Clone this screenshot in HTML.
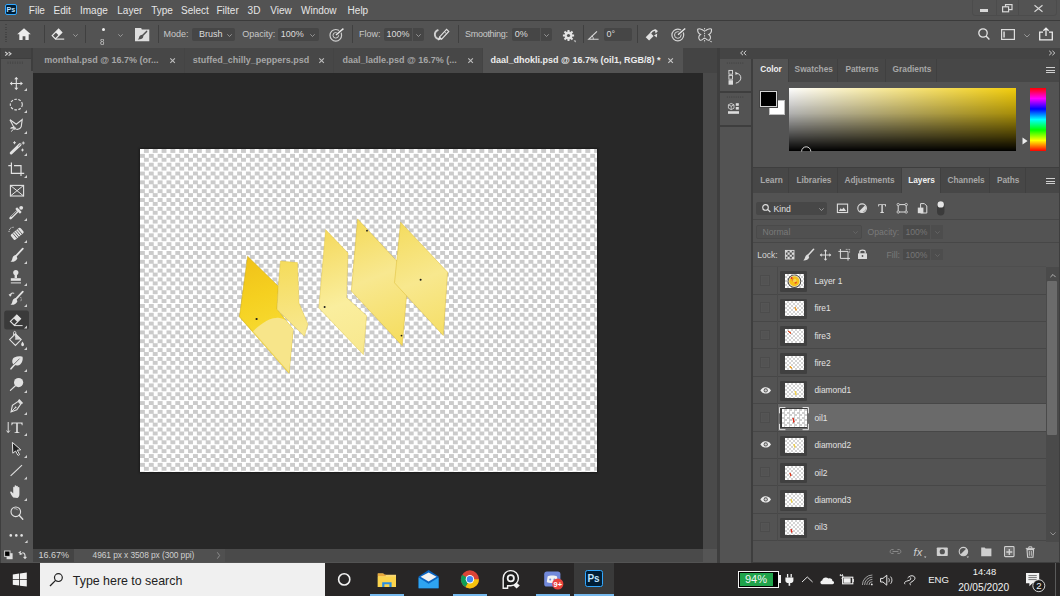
<!DOCTYPE html>
<html><head><meta charset="utf-8">
<style>
*{margin:0;padding:0;box-sizing:border-box}
html,body{width:1060px;height:596px;overflow:hidden;background:#535353;font-family:"Liberation Sans",sans-serif;color:#ddd}
.a{position:absolute}
.t{position:absolute;white-space:nowrap;line-height:1}
svg{position:absolute;overflow:visible}
</style></head><body>
<!-- MENU BAR -->
<div class="a" style="left:0;top:0;width:1060px;height:20px;background:#535353"></div>
<div class="a" style="left:0;top:19.5px;width:1060px;height:1px;background:#3b3b3b"></div>

<!-- menu content -->
<div class="a" style="left:5px;top:4.3px;width:12.2px;height:11px;border:1.2px solid #31a8ff;border-radius:2px;background:#001e36"></div>
<div class="t" style="left:6.5px;top:5.9px;font-size:7.2px;font-weight:700;color:#bfe3ff">Ps</div>
<div class="t" style="left:28.8px;top:5.7px;font-size:10px;color:#e6e6e6">File</div>
<div class="t" style="left:53.6px;top:5.7px;font-size:10px;color:#e6e6e6">Edit</div>
<div class="t" style="left:80px;top:5.7px;font-size:10px;color:#e6e6e6">Image</div>
<div class="t" style="left:117.3px;top:5.7px;font-size:10px;color:#e6e6e6">Layer</div>
<div class="t" style="left:151.2px;top:5.7px;font-size:10px;color:#e6e6e6">Type</div>
<div class="t" style="left:181px;top:5.7px;font-size:10px;color:#e6e6e6">Select</div>
<div class="t" style="left:216.5px;top:5.7px;font-size:10px;color:#e6e6e6">Filter</div>
<div class="t" style="left:247.6px;top:5.7px;font-size:10px;color:#e6e6e6">3D</div>
<div class="t" style="left:270.3px;top:5.7px;font-size:10px;color:#e6e6e6">View</div>
<div class="t" style="left:301px;top:5.7px;font-size:10px;color:#e6e6e6">Window</div>
<div class="t" style="left:347.6px;top:5.7px;font-size:10px;color:#e6e6e6">Help</div>
<!-- window controls -->
<div class="a" style="left:972.3px;top:-2px;width:85px;height:18px;border:1px solid #4c4c4c;border-radius:3px"></div>
<div class="a" style="left:995.5px;top:0;width:1px;height:15.5px;background:#4c4c4c"></div>
<div class="a" style="left:1018.2px;top:0;width:1px;height:15.5px;background:#4c4c4c"></div>
<div class="a" style="left:980px;top:8.6px;width:8px;height:3px;background:#d8d8d8"></div>
<svg style="left:1002px;top:4px" width="11" height="8" viewBox="0 0 11 8"><rect x="3.5" y="0.6" width="6.5" height="5" fill="none" stroke="#d8d8d8" stroke-width="1.2"/><rect x="0.6" y="2.8" width="6" height="5" fill="#535353" stroke="#d8d8d8" stroke-width="1.2"/></svg>
<svg style="left:1034px;top:4.5px" width="9" height="7" viewBox="0 0 9 7"><path d="M0.5 0.3L8.5 6.7M8.5 0.3L0.5 6.7" stroke="#d8d8d8" stroke-width="1.1"/></svg>
<!-- OPTIONS BAR -->
<div class="a" style="left:0;top:20.5px;width:1060px;height:27.3px;background:#535353"></div>
<div class="a" style="left:0;top:47.8px;width:1060px;height:0.6px;background:#3b3b3b"></div>

<!-- options content -->
<div class="a" style="left:5px;top:24px;width:1.5px;height:20px;background:repeating-linear-gradient(#444 0 1px,transparent 1px 2.5px)"></div>
<svg style="left:17px;top:28px" width="14" height="12" viewBox="0 0 14 12"><path d="M7 0.3L0.2 6.3H2.3V12H5.6V8.3H8.4V12H11.7V6.3H13.8Z" fill="#ececec"/></svg>
<div class="a" style="left:44.3px;top:24.8px;width:1px;height:18.7px;background:#404040"></div>
<svg style="left:51px;top:28px" width="14" height="12" viewBox="0 0 14 12"><path d="M1.2 7.6L7.6 1.2L10.8 4.4L4.4 10.8Z" fill="none" stroke="#ececec" stroke-width="1.2"/><path d="M4.6 4.2L7.6 1.2L10.8 4.4L7.8 7.4Z" fill="#ececec"/><path d="M4.4 11.1H13.2" stroke="#ececec" stroke-width="1.1"/></svg>
<svg style="left:73px;top:34px" width="5" height="3" viewBox="0 0 5 3"><path d="M0.3 0.3L2.5 2.5L4.7 0.3" fill="none" stroke="#aaa" stroke-width="0.8"/></svg>
<div class="a" style="left:84.6px;top:24.8px;width:1px;height:18.7px;background:#404040"></div>
<div class="a" style="left:101.5px;top:28px;width:3.2px;height:3.2px;border-radius:50%;background:#f0f0f0"></div>
<div class="t" style="left:100.2px;top:37px;font-size:9.8px;color:#c8c8c8;transform:scaleX(0.82);transform-origin:0 0">8</div>
<svg style="left:118px;top:34px" width="5" height="3" viewBox="0 0 5 3"><path d="M0.3 0.3L2.5 2.5L4.7 0.3" fill="none" stroke="#aaa" stroke-width="0.8"/></svg>
<svg style="left:134.6px;top:27.7px" width="14.3" height="13.3" viewBox="0 0 14.3 13.3"><path d="M0 0H6.2L6.8 1.6H14.3V13.3H0Z" fill="#dedede"/><path d="M11.6 3.4L7.6 7.6" stroke="#535353" stroke-width="1.5" stroke-linecap="round"/><path d="M7.4 6.8C5.6 6.8 4.4 8 4 9.4C3.7 10.4 3.4 10.9 2.8 11.4C5 11.6 7 11 7.9 9.8C8.5 9 8.6 7.6 7.4 6.8Z" fill="#535353"/></svg>
<div class="a" style="left:157.6px;top:24.8px;width:1px;height:18.7px;background:#404040"></div>
<div class="t" style="left:163.6px;top:30.2px;font-size:9px;color:#c8c8c8">Mode:</div>
<div class="a" style="left:192.2px;top:27.9px;width:42.6px;height:13.2px;background:#464646;border-radius:2px"></div>
<div class="t" style="left:199px;top:30.2px;font-size:9px;color:#dcdcdc">Brush</div>
<svg style="left:226.6px;top:34px" width="5" height="3" viewBox="0 0 5 3"><path d="M0.3 0.3L2.5 2.5L4.7 0.3" fill="none" stroke="#aaa" stroke-width="0.8"/></svg>
<div class="t" style="left:242.3px;top:30.2px;font-size:9px;color:#c8c8c8">Opacity:</div>
<div class="a" style="left:278.2px;top:27.9px;width:27.6px;height:13.2px;background:#464646;border-radius:2px 0 0 2px"></div>
<div class="a" style="left:306.4px;top:27.9px;width:12.2px;height:13.2px;background:#464646;border-radius:0 2px 2px 0"></div>
<div class="t" style="left:280.8px;top:30.2px;font-size:9px;color:#dcdcdc">100%</div>
<svg style="left:310px;top:34px" width="5" height="3" viewBox="0 0 5 3"><path d="M0.3 0.3L2.5 2.5L4.7 0.3" fill="none" stroke="#aaa" stroke-width="0.8"/></svg>
<svg style="left:328.6px;top:27.5px" width="15.2" height="13.6" viewBox="0 0 15.2 13.6"><circle cx="6.8" cy="7.3" r="5.8" fill="none" stroke="#cfcfcf" stroke-width="1.2"/><circle cx="6.8" cy="7.3" r="2.8" fill="none" stroke="#cfcfcf" stroke-width="1"/><path d="M6.8 7.3L14.4 0.6" stroke="#535353" stroke-width="3"/><path d="M7 7.1L14.4 0.6" stroke="#e8e8e8" stroke-width="1.4"/></svg>
<div class="a" style="left:352.3px;top:24.8px;width:1px;height:18.7px;background:#404040"></div>
<div class="t" style="left:359px;top:30.2px;font-size:9px;color:#c8c8c8">Flow:</div>
<div class="a" style="left:383.8px;top:27.9px;width:28.5px;height:13.2px;background:#464646;border-radius:2px 0 0 2px"></div>
<div class="a" style="left:412.9px;top:27.9px;width:11.4px;height:13.2px;background:#464646;border-radius:0 2px 2px 0"></div>
<div class="t" style="left:386.6px;top:30.2px;font-size:9px;color:#dcdcdc">100%</div>
<svg style="left:416px;top:34px" width="5" height="3" viewBox="0 0 5 3"><path d="M0.3 0.3L2.5 2.5L4.7 0.3" fill="none" stroke="#aaa" stroke-width="0.8"/></svg>
<svg style="left:433.8px;top:28px" width="15.5" height="13" viewBox="0 0 15.5 13"><path d="M4.4 1.8C1.8 2.8 0.6 5 0.9 7.2C1.2 9.4 3 10.9 5.2 11.2" fill="none" stroke="#cfcfcf" stroke-width="1.9"/><path d="M5.4 9.2L12.6 1.4L14.8 3.5L7.6 11.2Z" fill="none" stroke="#e0e0e0" stroke-width="1.1"/><path d="M3.8 12.6L5.4 8.6L8 11.1Z" fill="#e0e0e0"/><path d="M10.4 3.8L12.6 5.8" stroke="#e0e0e0" stroke-width="0.9"/></svg>
<div class="a" style="left:457.7px;top:24.8px;width:1px;height:18.7px;background:#404040"></div>
<div class="t" style="left:465px;top:30.2px;font-size:9px;letter-spacing:-0.28px;color:#c8c8c8">Smoothing:</div>
<div class="a" style="left:512px;top:27.9px;width:28px;height:13.2px;background:#464646;border-radius:2px 0 0 2px"></div>
<div class="a" style="left:540.6px;top:27.9px;width:11.4px;height:13.2px;background:#464646;border-radius:0 2px 2px 0"></div>
<div class="t" style="left:514.8px;top:30.2px;font-size:9px;color:#dcdcdc">0%</div>
<svg style="left:543.8px;top:34px" width="5" height="3" viewBox="0 0 5 3"><path d="M0.3 0.3L2.5 2.5L4.7 0.3" fill="none" stroke="#aaa" stroke-width="0.8"/></svg>
<svg style="left:563px;top:29.6px" width="13" height="12" viewBox="0 0 13 12"><g transform="translate(5.5 5.5)"><circle r="3.9" fill="#e4e4e4"/><g stroke="#e4e4e4" stroke-width="2"><path d="M0 -5.6V5.6M-5.6 0H5.6M-4 -4L4 4M4 -4L-4 4"/></g><circle r="1.6" fill="#535353"/></g><path d="M10.6 10.6H12.6V12.6Z" fill="#e4e4e4"/></svg>
<div class="a" style="left:582.7px;top:24.8px;width:1px;height:18.7px;background:#404040"></div>
<svg style="left:588px;top:30px" width="11" height="10" viewBox="0 0 11 10"><path d="M10.6 9.3H0.7L9 1.3" fill="none" stroke="#d8d8d8" stroke-width="1.1"/><path d="M5.4 9.3A5 5 0 0 0 4 5.7" fill="none" stroke="#d8d8d8" stroke-width="0.9"/></svg>
<div class="a" style="left:603.7px;top:27.9px;width:28.6px;height:13.2px;background:#464646;border-radius:2px"></div>
<div class="t" style="left:606.4px;top:30.2px;font-size:9px;color:#dcdcdc">0°</div>
<div class="a" style="left:636.7px;top:24.8px;width:1px;height:18.7px;background:#404040"></div>
<svg style="left:645px;top:28.5px" width="13.5" height="12.5" viewBox="0 0 13.5 12.5"><path d="M0.7 8.2L5.2 3.7L8.6 7.1L4.1 11.6Z" fill="#e2e2e2"/><path d="M5.5 4.5C6.5 2.2 9 0.8 11.3 1.6" fill="none" stroke="#e2e2e2" stroke-width="1.6"/><path d="M9.6 0L13 1.9L10.6 4.6Z" fill="#e2e2e2"/><path d="M9 6.6L12.2 4.5L11.8 8.5Z" fill="#e2e2e2"/></svg>
<svg style="left:671px;top:28px" width="15" height="13.5" viewBox="0 0 15 13.5"><circle cx="6.8" cy="7" r="5.9" fill="none" stroke="#d4d4d4" stroke-width="1.2"/><circle cx="6.8" cy="7" r="3.3" fill="none" stroke="#d4d4d4" stroke-width="1"/><path d="M6.8 7L14.2 0.5" stroke="#535353" stroke-width="3"/><path d="M7 6.8L14.2 0.5" stroke="#e8e8e8" stroke-width="1.4"/></svg>
<svg style="left:697px;top:27.8px" width="15" height="14.5" viewBox="0 0 15 14.5"><path d="M7 3C5 0.5 1.5 0.6 0.7 1.2C0.5 3.6 2 5.8 3.5 6.5C1.4 7.6 1.2 10.6 2.8 12C4.5 12.6 6.4 11 7 10" fill="none" stroke="#d8d8d8" stroke-width="1.1"/><path d="M8.3 3C10.3 0.5 13.8 0.6 14.5 1.2C14.7 3.6 13.2 5.8 11.8 6.5C13.8 7.6 14 10.6 12.5 12C10.8 12.6 8.9 11 8.3 10" fill="none" stroke="#d8d8d8" stroke-width="1.1"/><path d="M7.6 0V14.5" stroke="#d8d8d8" stroke-width="1" stroke-dasharray="1.4 1"/><path d="M12.6 13H14.6V14.5Z" fill="#d8d8d8"/></svg>
<svg style="left:977.6px;top:28.3px" width="12" height="12" viewBox="0 0 12 12"><circle cx="5" cy="5" r="4.2" fill="none" stroke="#e4e4e4" stroke-width="1.3"/><path d="M8 8L11.4 11.4" stroke="#e4e4e4" stroke-width="1.4"/></svg>
<svg style="left:1001px;top:29.2px" width="14" height="11" viewBox="0 0 14 11"><rect x="0.6" y="0.6" width="12.8" height="9.8" fill="none" stroke="#dcdcdc" stroke-width="1.2"/><rect x="2.3" y="2.5" width="1.5" height="6" fill="#dcdcdc"/></svg>
<svg style="left:1023.5px;top:33.5px" width="6" height="4" viewBox="0 0 6 4"><path d="M0.3 0.3L3 3L5.7 0.3" fill="none" stroke="#aaa" stroke-width="0.8"/></svg>
<svg style="left:1038.8px;top:27px" width="14" height="13.5" viewBox="0 0 14 13.5"><path d="M4 5.2H0.7V12.8H13.3V5.2H10" fill="none" stroke="#ececec" stroke-width="1.3"/><path d="M7 9V1.2M4.4 3.8L7 1.2L9.6 3.8" fill="none" stroke="#ececec" stroke-width="1.3"/></svg>
<!-- TOOLBAR -->
<div class="a" style="left:0;top:48px;width:33px;height:514.5px;background:#3e3e3e"></div>
<div class="a" style="left:1px;top:48.2px;width:30px;height:10px;background:#444"></div>
<div class="a" style="left:1px;top:58.5px;width:30px;height:504px;background:#535353"></div>
<div class="a" style="left:1px;top:70.6px;width:31.8px;height:492px;background:#535353"></div>
<!-- toolbar icons -->
<svg style="left:0;top:0" width="33" height="562"><path d="M5.2 52L7.6 53.8L5.2 55.6M8.6 52L11 53.8L8.6 55.6" fill="none" stroke="#cfcfcf" stroke-width="1.1"/><path d="M8 61.5V64M10.4 61.5V64M12.8 61.5V64M15.2 61.5V64M17.6 61.5V64M20 61.5V64M22.4 61.5V64" stroke="#474747" stroke-width="1"/><g fill="none" stroke="#e2e2e2" stroke-width="1.1"><path d="M16.3 77.6V89.4M10.4 83.5H22.2"/></g><g fill="#e2e2e2"><path d="M16.3 77L14.2 79.3H18.4Z"/><path d="M16.3 90L14.2 87.7H18.4Z"/><path d="M9.8 83.5L12.1 81.4V85.6Z"/><path d="M22.8 83.5L20.5 81.4V85.6Z"/></g><path d="M27 88V91H24Z" fill="#d0d0d0"/><ellipse cx="16.3" cy="104.6" rx="6" ry="5.3" fill="none" stroke="#e2e2e2" stroke-width="1.1" stroke-dasharray="2.6 1.4"/><path d="M27 110V113H24Z" fill="#d0d0d0"/><path d="M10 119.8L16.3 124.3L22.2 119.5L21.2 126.8C19.6 129.8 16.6 130 14.6 128.4C13.4 127.6 12 126.6 10.6 128.6" fill="none" stroke="#e2e2e2" stroke-width="1.1"/><path d="M10 119.8L14.2 128" fill="none" stroke="#e2e2e2" stroke-width="1.1"/><circle cx="14.2" cy="128.2" r="1.2" fill="none" stroke="#e2e2e2" stroke-width="0.9"/><path d="M13 129.4L11.4 131.6" stroke="#e2e2e2" stroke-width="1"/><path d="M27 131V134H24Z" fill="#d0d0d0"/><path d="M11.2 153L20 144.6" stroke="#e2e2e2" stroke-width="3" stroke-linecap="round"/><path d="M18.2 146.4L20.8 143.8" stroke="#535353" stroke-width="0.8"/><path d="M14.5 141.2V144.2M13 142.7H16M23.3 141.5V144.5M21.8 143H24.8M22.5 148.6V151.4M21.1 150H23.9" stroke="#e2e2e2" stroke-width="0.9"/><path d="M27 153V156H24Z" fill="#d0d0d0"/><path d="M8.3 165.6H11.4V173.3H21M11.4 162.5V165.6M14 165.6H21V176M21 173.3H24.2" fill="none" stroke="#e2e2e2" stroke-width="1.2"/><path d="M27 175V178H24Z" fill="#d0d0d0"/><rect x="10.4" y="185.4" width="13.2" height="10.6" fill="none" stroke="#e2e2e2" stroke-width="1.1"/><path d="M10.4 185.4L23.6 196M23.6 185.4L10.4 196" stroke="#e2e2e2" stroke-width="1"/><path d="M10.6 218.2L18.4 210.4" stroke="#e2e2e2" stroke-width="2.6" stroke-linecap="round"/><path d="M11.4 216.8L17 211.2" stroke="#535353" stroke-width="1"/><path d="M16.2 208.2L20.8 212.8" stroke="#e2e2e2" stroke-width="2.4"/><circle cx="21.2" cy="207.8" r="1.9" fill="#e2e2e2"/><path d="M27 218V221H24Z" fill="#d0d0d0"/><g transform="rotate(-40 17 234)"><rect x="11" y="230.6" width="12.6" height="6.8" rx="1.4" fill="#e2e2e2"/><path d="M14.2 230.6V237.4M16.4 230.6V237.4M18.6 230.6V237.4M20.8 230.6V237.4" stroke="#535353" stroke-width="0.8"/></g><path d="M9 232C9 229 11 227 14 227.3" fill="none" stroke="#e2e2e2" stroke-width="0.9" stroke-dasharray="1 0.8"/><path d="M27 240V243H24Z" fill="#d0d0d0"/><path d="M22.8 248.6L15.6 256.4" stroke="#e2e2e2" stroke-width="1.8" stroke-linecap="round"/><path d="M15.8 255C13.6 255.4 12.6 257 12.3 258.8C12 260.2 11.4 261 10.4 261.8C13.4 262.2 16.6 261 17.4 258.2Z" fill="#e2e2e2"/><path d="M27 261V264H24Z" fill="#d0d0d0"/><circle cx="15.8" cy="272.6" r="2.6" fill="#e2e2e2"/><rect x="14.6" y="274" width="2.4" height="4" fill="#e2e2e2"/><path d="M10.8 278.2H20.8V280.8H10.8Z" fill="#e2e2e2"/><path d="M10.8 282.4H21V283.4H10.8Z" fill="#e2e2e2"/><path d="M27 283V286H24Z" fill="#d0d0d0"/><path d="M22.8 291.6L15.6 299.4" stroke="#e2e2e2" stroke-width="1.8" stroke-linecap="round"/><path d="M15.8 298C13.6 298.4 12.6 300 12.3 301.8C12 303.2 11.4 304 10.4 304.8C13.4 305.2 16.6 304 17.4 301.2Z" fill="#e2e2e2"/><path d="M9.8 295.2C10.6 293.2 12.8 292.4 14.2 293.4" fill="none" stroke="#e2e2e2" stroke-width="1.1"/><path d="M8.6 294.2L10.2 296.8L12 294.6Z" fill="#e2e2e2"/><path d="M20.6 297.2C21.6 298.6 21.6 300.6 20.2 301.6" fill="none" stroke="#e2e2e2" stroke-width="0.8" stroke-dasharray="0.9 0.7"/><path d="M27 304V307H24Z" fill="#d0d0d0"/><rect x="4.2" y="310.4" width="24.8" height="19.2" rx="2.5" fill="#3a3a3a"/><path d="M10.4 321.4L16.8 315L20.6 318.8L14.2 325.2Z" fill="none" stroke="#e2e2e2" stroke-width="1.1"/><path d="M13.6 318.2L16.8 315L20.6 318.8L17.4 322Z" fill="#e2e2e2"/><path d="M14 325.6H22.6" stroke="#e2e2e2" stroke-width="1"/><path d="M27 325.5V328.5H24Z" fill="#d0d0d0"/><path d="M9.6 339.6L15.4 333.8L21.2 339.6L15.4 345.4Z" fill="none" stroke="#e2e2e2" stroke-width="1.1"/><path d="M15.4 333.8L21.2 339.6L15.2 339.8Z" fill="#e2e2e2" opacity="0.9"/><path d="M13.6 335.4V332.4C13.6 331 15.8 331 15.8 332.6V337" fill="none" stroke="#e2e2e2" stroke-width="0.9"/><path d="M22.4 341.6C21.6 343 21.2 343.8 21.2 344.6C21.2 345.6 22 346.2 22.6 346.2C23.4 346.2 24 345.6 24 344.6C24 343.8 23.4 343 22.4 341.6Z" fill="#e2e2e2"/><path d="M27 347V350H24Z" fill="#d0d0d0"/><path d="M11 368.8L15.6 363.4" stroke="#e2e2e2" stroke-width="1.6" stroke-linecap="round"/><path d="M14.2 357.4C17.2 356.2 21.2 356 22.6 357C23.2 360.6 21.6 364 18.8 365.2C16.6 366 14.4 365.2 13 363.8C11.8 362.2 12 358.6 14.2 357.4Z" fill="#e2e2e2"/><path d="M13.6 364.6L19.6 358.6" stroke="#535353" stroke-width="0.8"/><path d="M27 369V372H24Z" fill="#d0d0d0"/><circle cx="18.6" cy="382.6" r="4.6" fill="#e2e2e2"/><path d="M15.4 385.8L10.4 390.4" stroke="#e2e2e2" stroke-width="1.2" stroke-linecap="round"/><path d="M27 390V393H24Z" fill="#d0d0d0"/><path d="M11 412L12.4 405.4L18.2 401.4L20.8 404L16.8 409.8Z" fill="none" stroke="#e2e2e2" stroke-width="1.1"/><path d="M18.6 399.8L22.4 403.6" stroke="#e2e2e2" stroke-width="2"/><path d="M11 412L15 408" stroke="#e2e2e2" stroke-width="0.9"/><circle cx="15.6" cy="407.4" r="0.9" fill="#e2e2e2"/><path d="M27 412V415H24Z" fill="#d0d0d0"/><path d="M8.2 422V432.4M6.6 430.6L8.2 432.6L9.8 430.6" fill="none" stroke="#e2e2e2" stroke-width="1"/><path d="M11.4 422.4H22.6V425.2H21.8C21.6 423.8 21.2 423.6 20 423.6H17.8V431.4C17.8 432 18.2 432.2 19.4 432.2V432.9H14.6V432.2C15.8 432.2 16.2 432 16.2 431.4V423.6H14C12.8 423.6 12.4 423.8 12.2 425.2H11.4Z" fill="#e2e2e2"/><path d="M27 433V436H24Z" fill="#d0d0d0"/><path d="M12.4 442.4L20.8 449.8L17.2 450.2L19.6 454.6L18 455.4L15.6 451L12.8 453.2Z" fill="#202020" stroke="#e2e2e2" stroke-width="1"/><path d="M27 455V458H24Z" fill="#d0d0d0"/><path d="M10.6 475.8L22 465.2" stroke="#e2e2e2" stroke-width="1.1"/><path d="M27 476.5V479.5H24Z" fill="#d0d0d0"/><path d="M13.2 497.6C11.8 496 10.8 494 10.2 492.6C10 491.8 10.8 491.2 11.6 491.8L13.2 493.4V487.4C13.2 486.4 14.6 486.4 14.6 487.4V491.2V486C14.6 485 16.2 485 16.2 486V491V486.4C16.2 485.6 17.8 485.6 17.8 486.4V491.2V487.6C17.8 486.8 19.4 486.8 19.4 487.6V494.2C19.4 496.4 18.4 497.6 17.4 497.9Z" fill="#e2e2e2"/><path d="M27 498V501H24Z" fill="#d0d0d0"/><circle cx="15.8" cy="511.8" r="4.8" fill="none" stroke="#e2e2e2" stroke-width="1.1"/><path d="M19.2 515.2L22.8 519.2" stroke="#e2e2e2" stroke-width="1.3" stroke-linecap="round"/><path d="M14.2 508.8C15.6 508.4 17.2 509 17.8 510.2" fill="none" stroke="#e2e2e2" stroke-width="0.7"/><circle cx="10.8" cy="535.4" r="1.3" fill="#e2e2e2"/><circle cx="16.3" cy="535.4" r="1.3" fill="#e2e2e2"/><circle cx="21.6" cy="535.4" r="1.3" fill="#e2e2e2"/><path d="M27.6 540V543H24.6Z" fill="#d0d0d0"/><rect x="6.6" y="553.2" width="6" height="6" fill="#dedede"/><rect x="4.6" y="551" width="5.4" height="5.4" fill="#000" stroke="#cfcfcf" stroke-width="1"/><path d="M20 552.8L22.2 554.4M20.2 552.4V555M21 551.4L19.2 552.6L21 553.8M22.2 552.8C24 552.8 25 553.6 25 555.6V558M23.6 556.8L25 558.4L26.4 556.8" fill="none" stroke="#dedede" stroke-width="1.1"/></svg>
<!-- DOC TAB BAR -->
<div class="a" style="left:33.3px;top:48.2px;width:684px;height:24.4px;background:#444"></div>

<div class="a" style="left:33.3px;top:48.3px;width:151px;height:24.3px;background:#474747"></div>
<div class="a" style="left:185.3px;top:48.3px;width:148px;height:24.3px;background:#474747"></div>
<div class="a" style="left:334.2px;top:48.3px;width:148px;height:24.3px;background:#474747"></div>
<div class="a" style="left:482.8px;top:48.3px;width:200.4px;height:24.3px;background:#535353"></div>
<div class="t" style="left:44.2px;top:56.2px;font-size:9px;font-weight:700;color:#a6a6a6">monthal.psd @ 16.7% (or...</div>
<div class="t" style="left:192.7px;top:56.2px;font-size:9px;font-weight:700;color:#a6a6a6">stuffed_chilly_peppers.psd</div>
<div class="t" style="left:342.5px;top:56.2px;font-size:9px;font-weight:700;color:#a6a6a6">daal_ladle.psd @ 16.7% (...</div>
<div class="t" style="left:490.6px;top:56.2px;font-size:9px;font-weight:700;color:#ececec">daal_dhokli.psd @ 16.7% (oil1, RGB/8) *</div>
<svg style="left:169.70000000000002px;top:57.6px" width="5.2" height="5.2" viewBox="0 0 5.2 5.2"><path d="M0.3 0.3L4.9 4.9M4.9 0.3L0.3 4.9" stroke="#bdbdbd" stroke-width="1.1"/></svg><svg style="left:318.9px;top:57.6px" width="5.2" height="5.2" viewBox="0 0 5.2 5.2"><path d="M0.3 0.3L4.9 4.9M4.9 0.3L0.3 4.9" stroke="#bdbdbd" stroke-width="1.1"/></svg><svg style="left:467.79999999999995px;top:57.6px" width="5.2" height="5.2" viewBox="0 0 5.2 5.2"><path d="M0.3 0.3L4.9 4.9M4.9 0.3L0.3 4.9" stroke="#bdbdbd" stroke-width="1.1"/></svg><svg style="left:668.0px;top:57.6px" width="5.2" height="5.2" viewBox="0 0 5.2 5.2"><path d="M0.3 0.3L4.9 4.9M4.9 0.3L0.3 4.9" stroke="#c8c8c8" stroke-width="1.1"/></svg>
<!-- CANVAS AREA -->
<div class="a" style="left:33.3px;top:72.6px;width:670px;height:476.3px;background:#282828"></div>
<div class="a" style="left:703px;top:72.6px;width:14.3px;height:476.3px;background:#4a4a4a"></div>

<div class="a" style="left:140px;top:149.4px;width:457px;height:323px;box-shadow:0 0 2px 1px rgba(0,0,0,0.35);background-color:#fff;background-image:conic-gradient(#cbcbcb 25%,#fff 0 50%,#cbcbcb 0 75%,#fff 0);background-size:8.832px 8.832px;background-position:0 0"></div>

<svg style="left:0;top:0" width="1060" height="596">
<defs>
<linearGradient id="gA" x1="250" y1="258" x2="275" y2="330" gradientUnits="userSpaceOnUse"><stop offset="0" stop-color="#f0c21a"/><stop offset="0.5" stop-color="#f5d020"/><stop offset="1" stop-color="#f7da30"/></linearGradient><filter id="soft" x="-10%" y="-10%" width="120%" height="120%"><feGaussianBlur stdDeviation="0.7"/></filter>
<linearGradient id="gB" x1="285" y1="262" x2="300" y2="335" gradientUnits="userSpaceOnUse"><stop offset="0" stop-color="#f5dc5c"/><stop offset="1" stop-color="#f8e890"/></linearGradient>
<linearGradient id="gC" x1="320" y1="230" x2="365" y2="350" gradientUnits="userSpaceOnUse"><stop offset="0" stop-color="#f4d85a"/><stop offset="0.6" stop-color="#faee9e"/><stop offset="1" stop-color="#f8e88e"/></linearGradient>
<linearGradient id="gD" x1="355" y1="220" x2="405" y2="345" gradientUnits="userSpaceOnUse"><stop offset="0" stop-color="#f4da5a"/><stop offset="0.45" stop-color="#f8e890"/><stop offset="1" stop-color="#f5dc5c"/></linearGradient>
<linearGradient id="gE" x1="398" y1="225" x2="445" y2="335" gradientUnits="userSpaceOnUse"><stop offset="0" stop-color="#f4dc60"/><stop offset="0.5" stop-color="#f8e88e"/><stop offset="1" stop-color="#f5de66"/></linearGradient>
</defs>
<path d="M247.6 256.2L278.3 286.3L277 309L293.1 329.5L289 373.2L239.4 316.8Z" fill="url(#gA)" stroke="#c9a814" stroke-width="0.5"/>
<clipPath id="clipA"><path d="M247.6 256.2L278.3 286.3L277 309L293.1 329.5L289 373.2L239.4 316.8Z"/></clipPath>
<g clip-path="url(#clipA)"><path d="M250 334C258 326 268 318 276 318C282 317 288 321 294 326L300 380L250 380Z" fill="#f7e58a" filter="url(#soft)"/><path d="M239.4 316.8L289 373.2" stroke="#e8c830" stroke-width="1.4" opacity="0.6"/></g>
<path d="M280.4 261.1L297.5 262.6L299 303L307.9 324.2L304.5 336.3L277 309.4L278.3 286.3Z" fill="url(#gB)" stroke="#dcc040" stroke-width="0.4"/>
<path d="M325.6 229.6L348 253L346.5 297.5L366.6 315.7L363.4 354.7L318.8 308Z" fill="url(#gC)" stroke="#dcc040" stroke-width="0.4"/>
<path d="M357.6 218.9L408.5 273.6L402.2 345.7L351.3 291Z" fill="url(#gD)" stroke="#d8b830" stroke-width="0.45"/>
<path d="M400.6 222.2L447.6 272.2L443.3 335.6L394.5 282.8Z" fill="url(#gE)" stroke="#d8b830" stroke-width="0.45"/>
<circle cx="256.6" cy="319" r="1.1" fill="#1a1a1a"/>
<circle cx="324.6" cy="306.9" r="1" fill="#1a1a1a"/>
<circle cx="367" cy="230.7" r="0.9" fill="#1a1a1a"/>
<circle cx="401.5" cy="335.6" r="0.9" fill="#1a1a1a"/>
<circle cx="420.6" cy="279.8" r="1" fill="#1a1a1a"/>
</svg>
<!-- STATUS BAR -->
<div class="a" style="left:33.3px;top:548.9px;width:684px;height:13.6px;background:#4a4a4a"></div>

<div class="a" style="left:703px;top:548.9px;width:14.3px;height:13.6px;background:#555"></div>
<div class="a" style="left:33.3px;top:548.9px;width:40.5px;height:13.6px;background:#444"></div>
<div class="a" style="left:73.8px;top:548.9px;width:151.2px;height:13.6px;background:#505050"></div>
<div class="t" style="left:38.4px;top:551.2px;font-size:9px;letter-spacing:0px;color:#d2d2d2">16.67%</div>
<div class="t" style="left:92.6px;top:551.4px;font-size:8.4px;letter-spacing:-0.08px;color:#cfcfcf">4961 px x 3508 px (300 ppi)</div>
<svg style="left:217.4px;top:552px" width="3" height="7" viewBox="0 0 3 7"><path d="M0.3 0.3L2.6 3.5L0.3 6.7" fill="none" stroke="#999" stroke-width="0.8"/></svg>
<!-- RIGHT SEPARATOR -->
<div class="a" style="left:717.3px;top:48px;width:342.7px;height:514.5px;background:#3e3e3e"></div>
<!-- collapsed column -->
<div class="a" style="left:720px;top:48.3px;width:340px;height:10.3px;background:#444"></div>
<div class="a" style="left:720px;top:58.7px;width:30.6px;height:32.8px;background:#535353"></div>
<div class="a" style="left:720px;top:92.7px;width:30.6px;height:32.8px;background:#535353"></div>
<div class="a" style="left:720px;top:126.7px;width:30.6px;height:436px;background:#535353"></div>
<!-- COLOR PANEL -->
<div class="a" style="left:752.6px;top:58.6px;width:306px;height:23px;background:#474747"></div>
<div class="a" style="left:752.6px;top:81.6px;width:306px;height:85.8px;background:#535353"></div>

<!-- right column content -->
<svg style="left:0;top:0" width="1060" height="596">
<path d="M743 50.8L740.6 53L743 55.2M746.2 50.8L743.8 53L746.2 55.2" fill="none" stroke="#cfcfcf" stroke-width="1"/>
<path d="M1049.2 50.8L1051.6 53L1049.2 55.2M1052.4 50.8L1054.8 53L1052.4 55.2" fill="none" stroke="#cfcfcf" stroke-width="1"/>
<path d="M727.4 62.2V64M729.6 62.2V64M731.8 62.2V64M734 62.2V64M736.2 62.2V64M738.4 62.2V64M740.6 62.2V64M742.8 62.2V64" stroke="#474747" stroke-width="0.9"/>
<path d="M727.4 96.2V98M729.6 96.2V98M731.8 96.2V98M734 96.2V98M736.2 96.2V98M738.4 96.2V98M740.6 96.2V98M742.8 96.2V98" stroke="#474747" stroke-width="0.9"/>
<rect x="728.9" y="70.4" width="3.6" height="3.8" fill="none" stroke="#dcdcdc" stroke-width="0.9"/>
<rect x="728.9" y="75.4" width="3.6" height="3.8" fill="none" stroke="#dcdcdc" stroke-width="0.9"/>
<rect x="728.5" y="80.2" width="4.5" height="4.5" fill="#dcdcdc"/>
<path d="M735.2 71.8L735.6 75L738 73.2Z" fill="#dcdcdc"/>
<path d="M736.4 73.6C739.2 73.2 741 75.6 740.8 78.2C740.6 80.6 738.6 82.6 735.8 83.2" fill="none" stroke="#dcdcdc" stroke-width="1"/>
<path d="M728.4 104.8L731.2 103.4L734 104.8V108.2L731.2 109.6L728.4 108.2Z M728.4 104.8L731.2 106.2L734 104.8M731.2 106.2V109.6" fill="none" stroke="#dcdcdc" stroke-width="0.8"/>
<rect x="735.8" y="103.2" width="3" height="2.6" fill="#dcdcdc"/>
<rect x="735.8" y="107" width="3" height="2.6" fill="#dcdcdc"/>
<rect x="728" y="111.2" width="11" height="2.6" fill="#dcdcdc"/>
</svg>
<!-- color panel -->
<div class="a" style="left:752.6px;top:58.6px;width:35.1px;height:23px;background:#535353"></div>
<div class="a" style="left:787.7px;top:58.6px;width:1px;height:23px;background:#404040"></div>
<div class="a" style="left:836.8px;top:58.6px;width:1px;height:23px;background:#404040"></div>
<div class="a" style="left:884.6px;top:58.6px;width:1px;height:23px;background:#404040"></div>
<div class="a" style="left:936px;top:58.6px;width:1px;height:23px;background:#404040"></div>
<div class="t" style="left:760.2px;top:65px;font-size:8.3px;font-weight:700;color:#f0f0f0">Color</div>
<div class="t" style="left:794.6px;top:65px;font-size:8.3px;font-weight:700;color:#a8a8a8">Swatches</div>
<div class="t" style="left:845.4px;top:65px;font-size:8.3px;font-weight:700;color:#a8a8a8">Patterns</div>
<div class="t" style="left:892.6px;top:65px;font-size:8.3px;font-weight:700;color:#a8a8a8">Gradients</div>
<div class="a" style="left:1046px;top:67px;width:9px;height:6.5px;background:repeating-linear-gradient(#cfcfcf 0 1.2px,transparent 1.2px 2.6px)"></div>
<div class="a" style="left:768.8px;top:99.6px;width:16px;height:15.8px;background:#fff;border:1px solid #bdbdbd"></div>
<div class="a" style="left:760.2px;top:90.8px;width:16.8px;height:16.4px;background:#000;border:1.6px solid #d6d6d6;box-shadow:0 0 0 1px #444"></div>
<div class="a" style="left:789.2px;top:87.6px;width:226.8px;height:63.6px;background:linear-gradient(to bottom,rgba(0,0,0,0) 0%,rgba(0,0,0,0.3) 40%,rgba(0,0,0,0.7) 75%,#000 100%),linear-gradient(to right,#fff,#f2cd0c)"></div>
<svg style="left:800px;top:143px" width="14" height="9" viewBox="0 0 14 9"><path d="M1.6 8.4A4.6 4.6 0 0 1 10.8 8.4" fill="none" stroke="#e8e8e8" stroke-width="0.9"/></svg>
<div class="a" style="left:1029.5px;top:87.6px;width:16.3px;height:63.6px;background:linear-gradient(to bottom,#ff0000 0%,#ff00ff 16.6%,#0000ff 33.3%,#00ffff 50%,#00ff00 66.6%,#ffff00 83.3%,#ff0000 100%)"></div>
<svg style="left:1021.6px;top:137.4px" width="6" height="8" viewBox="0 0 6 8"><path d="M0.5 0.6L5.6 4L0.5 7.4Z" fill="#ececec"/></svg>
<!-- LAYERS PANEL -->
<div class="a" style="left:752.6px;top:168.3px;width:306px;height:24.6px;background:#474747"></div>
<div class="a" style="left:752.6px;top:193.2px;width:306px;height:369px;background:#535353"></div>

<!-- layers header -->
<div class="a" style="left:901px;top:168.3px;width:39px;height:24.6px;background:#535353"></div>
<div class="a" style="left:788.3px;top:168.3px;width:1px;height:24.6px;background:#404040"></div><div class="a" style="left:836.6px;top:168.3px;width:1px;height:24.6px;background:#404040"></div><div class="a" style="left:900.5px;top:168.3px;width:1px;height:24.6px;background:#404040"></div><div class="a" style="left:939.9px;top:168.3px;width:1px;height:24.6px;background:#404040"></div><div class="a" style="left:989px;top:168.3px;width:1px;height:24.6px;background:#404040"></div><div class="a" style="left:1025.3px;top:168.3px;width:1px;height:24.6px;background:#404040"></div>
<div class="t" style="left:760.2px;top:176.2px;font-size:8.3px;font-weight:700;color:#a8a8a8">Learn</div>
<div class="t" style="left:796.4px;top:176.2px;font-size:8.3px;font-weight:700;color:#a8a8a8">Libraries</div>
<div class="t" style="left:844.4px;top:176.2px;font-size:8.3px;font-weight:700;color:#a8a8a8">Adjustments</div>
<div class="t" style="left:908.2px;top:176.2px;font-size:8.3px;font-weight:700;color:#f0f0f0">Layers</div>
<div class="t" style="left:947.4px;top:176.2px;font-size:8.3px;font-weight:700;color:#a8a8a8">Channels</div>
<div class="t" style="left:996.9px;top:176.2px;font-size:8.3px;font-weight:700;color:#a8a8a8">Paths</div>
<div class="a" style="left:1046px;top:178.4px;width:9px;height:6.5px;background:repeating-linear-gradient(#cfcfcf 0 1.2px,transparent 1.2px 2.6px)"></div>
<!-- filter row -->
<div class="a" style="left:756px;top:202px;width:71px;height:13.2px;background:#474747;border-radius:2px"></div>
<svg style="left:762.3px;top:204.4px" width="9" height="8.4" viewBox="0 0 9 8.4"><circle cx="3.5" cy="3.4" r="2.8" fill="none" stroke="#e0e0e0" stroke-width="1.1"/><path d="M5.5 5.4L8.4 8.1" stroke="#e0e0e0" stroke-width="1.3"/></svg>
<div class="t" style="left:773.6px;top:205px;font-size:8.6px;color:#e0e0e0">Kind</div>
<svg style="left:818.9px;top:208px" width="5" height="3" viewBox="0 0 5 3"><path d="M0.3 0.3L2.5 2.5L4.7 0.3" fill="none" stroke="#aaa" stroke-width="0.8"/></svg>
<svg style="left:0;top:0" width="1060" height="596">
<rect x="837.4" y="204.1" width="10.2" height="8.4" fill="none" stroke="#dcdcdc" stroke-width="1.1"/><path d="M838.8 211L840.6 208.2L842 209.6L843.6 207.6L846.2 211Z" fill="#dcdcdc"/>
<circle cx="862.1" cy="208.2" r="4.3" fill="none" stroke="#dcdcdc" stroke-width="1.1"/><path d="M865.1 205.2A4.3 4.3 0 0 1 859.1 211.2Z" fill="#dcdcdc"/>
<path d="M878.2 204.2H886V206.4H885.3C885.1 205.4 884.8 205.1 884 205.1H882.8V211.5C882.8 212 883.1 212.2 884 212.2V212.9H880.2V212.2C881.1 212.2 881.4 212 881.4 211.5V205.1H880.2C879.4 205.1 879.1 205.4 878.9 206.4H878.2Z" fill="#dcdcdc"/>
<rect x="898.2" y="204.6" width="8" height="7.4" fill="none" stroke="#dcdcdc" stroke-width="1"/><circle cx="898.2" cy="204.6" r="1.2" fill="#535353" stroke="#dcdcdc" stroke-width="0.8"/><circle cx="906.2" cy="204.6" r="1.2" fill="#535353" stroke="#dcdcdc" stroke-width="0.8"/><circle cx="898.2" cy="212" r="1.2" fill="#535353" stroke="#dcdcdc" stroke-width="0.8"/><circle cx="906.2" cy="212" r="1.2" fill="#535353" stroke="#dcdcdc" stroke-width="0.8"/>
<path d="M920.6 203.6H924.4L926.8 206V213H920.6Z" fill="none" stroke="#dcdcdc" stroke-width="1"/><rect x="917.8" y="207.6" width="5.6" height="5.6" fill="#dcdcdc"/>
<rect x="937" y="201" width="7.4" height="14.4" rx="3.7" fill="#3b3b3b"/><circle cx="940.7" cy="204.4" r="3.2" fill="#e6e6e6"/>
</svg>
<div class="a" style="left:752.6px;top:219px;width:306px;height:1px;background:#474747"></div>
<!-- blend row -->
<div class="a" style="left:756px;top:224.8px;width:105.7px;height:14.2px;background:#505050;border:1px solid #4a4a4a;border-radius:2px"></div>
<div class="t" style="left:762.6px;top:228.2px;font-size:8.6px;color:#7a7a7a">Normal</div>
<svg style="left:853px;top:231px" width="5" height="3" viewBox="0 0 5 3"><path d="M0.3 0.3L2.5 2.5L4.7 0.3" fill="none" stroke="#6a6a6a" stroke-width="0.8"/></svg>
<div class="t" style="left:867.6px;top:228.2px;font-size:8.6px;color:#7a7a7a">Opacity:</div>
<div class="a" style="left:902.5px;top:225px;width:27.7px;height:13.6px;background:#4a4a4a"></div>
<div class="a" style="left:931.2px;top:225px;width:11.6px;height:13.6px;background:#4d4d4d"></div>
<div class="t" style="left:905.4px;top:228.2px;font-size:8.6px;color:#767676">100%</div>
<svg style="left:934.6px;top:231px" width="5" height="3" viewBox="0 0 5 3"><path d="M0.3 0.3L2.5 2.5L4.7 0.3" fill="none" stroke="#6a6a6a" stroke-width="0.8"/></svg>
<div class="a" style="left:752.6px;top:242px;width:306px;height:1px;background:#474747"></div>
<!-- lock row -->
<div class="t" style="left:757.2px;top:250.6px;font-size:8.6px;color:#d4d4d4">Lock:</div>
<svg style="left:0;top:0" width="1060" height="596">
<rect x="785.4" y="250.4" width="8.6" height="8.6" fill="none" stroke="#dcdcdc" stroke-width="0.9"/><path d="M785.4 250.4h2.15v2.15h-2.15zM789.7 250.4h2.15v2.15h-2.15zM787.55 252.55h2.15v2.15h-2.15zM791.85 252.55h2.15v2.15h-2.15zM785.4 254.7h2.15v2.15h-2.15zM789.7 254.7h2.15v2.15h-2.15zM787.55 256.85h2.15v2.15h-2.15zM791.85 256.85h2.15v2.15h-2.15z" fill="#dcdcdc"/>
<path d="M813.6 249.2L807.8 255.4" stroke="#dcdcdc" stroke-width="1.5" stroke-linecap="round"/><path d="M807.8 254.4C806 254.8 805.3 256.2 805 257.6C804.8 258.8 804.2 259.6 803.3 260.4C805.8 260.6 808.4 259.6 809.2 257.2Z" fill="#dcdcdc"/>
<path d="M825.5 250V260M820.5 255H830.5" stroke="#dcdcdc" stroke-width="1"/><path d="M825.5 249.2L823.7 251.2H827.3ZM825.5 260.8L823.7 258.8H827.3ZM819.7 255L821.7 253.2V256.8ZM831.3 255L829.3 253.2V256.8Z" fill="#dcdcdc"/>
<path d="M840.4 249V258.4H850M838.4 251.4H848V260.6" fill="none" stroke="#dcdcdc" stroke-width="1"/><path d="M845.8 249.4L849.6 249.4L849.6 253" fill="none" stroke="#dcdcdc" stroke-width="0.8" stroke-dasharray="1 0.7"/>
<path d="M859.8 253.4V251.6C859.8 249.6 865.2 249.6 865.2 251.6V253.4" fill="none" stroke="#dcdcdc" stroke-width="1.2"/><rect x="858" y="253.2" width="9" height="5.8" rx="0.6" fill="#dcdcdc"/><circle cx="862.5" cy="256" r="0.9" fill="#535353"/>
</svg>
<div class="t" style="left:886.6px;top:250.6px;font-size:8.6px;color:#7a7a7a">Fill:</div>
<div class="a" style="left:902.5px;top:248.6px;width:27.7px;height:11.8px;background:#4a4a4a"></div>
<div class="a" style="left:931.2px;top:248.6px;width:11.6px;height:11.8px;background:#4d4d4d"></div>
<div class="t" style="left:905.4px;top:250.8px;font-size:8.6px;color:#767676">100%</div>
<svg style="left:934.6px;top:253.6px" width="5" height="3" viewBox="0 0 5 3"><path d="M0.3 0.3L2.5 2.5L4.7 0.3" fill="none" stroke="#6a6a6a" stroke-width="0.8"/></svg>
<!-- layers list -->
<div class="a" style="left:753px;top:266px;width:293px;height:0.8px;background:#4e4e4e"></div>
<div class="a" style="left:753px;top:293.60px;width:293px;height:1px;background:#474747"></div>
<div class="a" style="left:777px;top:266.86px;width:0.6px;height:27.54px;background:#4a4a4a"></div>
<div class="a" style="left:759.8px;top:275.06px;width:10.4px;height:10.6px;border:1px solid #4c4c4c;box-shadow:inset 0 0 0 0.5px #585858"></div>
<div class="a" style="left:780.4px;top:271.26px;width:26.6px;height:20.4px;background:#404040;border-radius:1px"></div>
<div class="a" style="left:784.7px;top:273.86px;width:19.5px;height:14.4px;background-color:#fff;background-image:conic-gradient(#d4d4d4 25%,#fff 0 50%,#d4d4d4 0 75%,#fff 0);background-size:4px 4px"></div>
<svg style="left:784.7px;top:273.86px" width="19.5" height="14.4" viewBox="0 0 19.5 14.4"><circle cx="9.4" cy="7.2" r="6.8" fill="#444"/><circle cx="9.4" cy="7.2" r="5.9" fill="#e8e0c0"/><circle cx="9.4" cy="7.2" r="5" fill="#f6c21a"/><circle cx="8" cy="6" r="1.4" fill="#f08020"/><circle cx="10.6" cy="8.6" r="1.2" fill="#e85020"/><circle cx="6.6" cy="4" r="0.9" fill="#e02020"/><circle cx="9.6" cy="6.6" r="1.8" fill="#f8e060" opacity="0.8"/></svg>
<div class="t" style="left:814.4px;top:276.86px;font-size:8.4px;color:#e2e2e2">Layer 1</div>
<div class="a" style="left:753px;top:321.00px;width:293px;height:1px;background:#474747"></div>
<div class="a" style="left:777px;top:294.26px;width:0.6px;height:27.54px;background:#4a4a4a"></div>
<div class="a" style="left:759.8px;top:302.46px;width:10.4px;height:10.6px;border:1px solid #4c4c4c;box-shadow:inset 0 0 0 0.5px #585858"></div>
<div class="a" style="left:780.4px;top:298.66px;width:26.6px;height:20.4px;background:#404040;border-radius:1px"></div>
<div class="a" style="left:784.7px;top:301.26px;width:19.5px;height:14.4px;background-color:#fff;background-image:conic-gradient(#d4d4d4 25%,#fff 0 50%,#d4d4d4 0 75%,#fff 0);background-size:4px 4px"></div>
<svg style="left:0;top:27.66px" width="1060" height="300"><path d="M795 279l1.5 3l-0.6 0.4Z" fill="#f0a030" stroke="#f0a030" stroke-width="1"/></svg>
<div class="t" style="left:814.4px;top:304.26px;font-size:8.4px;color:#e2e2e2">fire1</div>
<div class="a" style="left:753px;top:348.40px;width:293px;height:1px;background:#474747"></div>
<div class="a" style="left:777px;top:321.66px;width:0.6px;height:27.54px;background:#4a4a4a"></div>
<div class="a" style="left:759.8px;top:329.86px;width:10.4px;height:10.6px;border:1px solid #4c4c4c;box-shadow:inset 0 0 0 0.5px #585858"></div>
<div class="a" style="left:780.4px;top:326.06px;width:26.6px;height:20.4px;background:#404040;border-radius:1px"></div>
<div class="a" style="left:784.7px;top:328.66px;width:19.5px;height:14.4px;background-color:#fff;background-image:conic-gradient(#d4d4d4 25%,#fff 0 50%,#d4d4d4 0 75%,#fff 0);background-size:4px 4px"></div>
<svg style="left:0;top:55.06px" width="1060" height="300"><path d="M788 276l3 2l-0.6 0.4Z" fill="#e04a20" stroke="#e04a20" stroke-width="1"/></svg>
<div class="t" style="left:814.4px;top:331.66px;font-size:8.4px;color:#e2e2e2">fire3</div>
<div class="a" style="left:753px;top:375.80px;width:293px;height:1px;background:#474747"></div>
<div class="a" style="left:777px;top:349.06px;width:0.6px;height:27.54px;background:#4a4a4a"></div>
<div class="a" style="left:759.8px;top:357.26px;width:10.4px;height:10.6px;border:1px solid #4c4c4c;box-shadow:inset 0 0 0 0.5px #585858"></div>
<div class="a" style="left:780.4px;top:353.46px;width:26.6px;height:20.4px;background:#404040;border-radius:1px"></div>
<div class="a" style="left:784.7px;top:356.06px;width:19.5px;height:14.4px;background-color:#fff;background-image:conic-gradient(#d4d4d4 25%,#fff 0 50%,#d4d4d4 0 75%,#fff 0);background-size:4px 4px"></div>
<svg style="left:0;top:82.46px" width="1060" height="300"><path d="M790 284l1.8 2l-0.6 0.4Z" fill="#f0a020" stroke="#f0a020" stroke-width="1"/></svg>
<div class="t" style="left:814.4px;top:359.06px;font-size:8.4px;color:#e2e2e2">fire2</div>
<div class="a" style="left:753px;top:403.20px;width:293px;height:1px;background:#474747"></div>
<div class="a" style="left:777px;top:376.46px;width:0.6px;height:27.54px;background:#4a4a4a"></div>
<svg style="left:759.6px;top:386.66px" width="11.4" height="6.8" viewBox="0 0 11.4 6.8"><path d="M0.4 3.4C2 1 3.8 0.3 5.7 0.3C7.6 0.3 9.4 1 11 3.4C9.4 5.8 7.6 6.5 5.7 6.5C3.8 6.5 2 5.8 0.4 3.4Z" fill="#ececec"/><circle cx="5.7" cy="3.4" r="2.1" fill="#535353"/><circle cx="5.7" cy="3.4" r="1.2" fill="#cfcfcf"/></svg>
<div class="a" style="left:780.4px;top:380.86px;width:26.6px;height:20.4px;background:#404040;border-radius:1px"></div>
<div class="a" style="left:784.7px;top:383.46px;width:19.5px;height:14.4px;background-color:#fff;background-image:conic-gradient(#d4d4d4 25%,#fff 0 50%,#d4d4d4 0 75%,#fff 0);background-size:4px 4px"></div>
<svg style="left:0;top:109.86px" width="1060" height="300"><path d="M795 281l1.4 3.5l-0.6 0.4Z" fill="#f2d24a" stroke="#f2d24a" stroke-width="1"/></svg>
<div class="t" style="left:814.4px;top:386.46px;font-size:8.4px;color:#e2e2e2">diamond1</div>
<div class="a" style="left:777.3px;top:404.40px;width:268.5px;height:26.94px;background:#6a6a6a"></div>
<div class="a" style="left:753px;top:430.60px;width:293px;height:1px;background:#474747"></div>
<div class="a" style="left:777px;top:403.86px;width:0.6px;height:27.54px;background:#4a4a4a"></div>
<div class="a" style="left:759.8px;top:412.06px;width:10.4px;height:10.6px;border:1px solid #4c4c4c;box-shadow:inset 0 0 0 0.5px #585858"></div>
<div class="a" style="left:780.3px;top:407.66px;width:27px;height:20.8px;background:#3a3a3a"></div>
<div class="a" style="left:782px;top:409.36px;width:24.5px;height:17.6px;background-color:#fff;background-image:conic-gradient(#cfcfcf 25%,#fff 0 50%,#cfcfcf 0 75%,#fff 0);background-size:5px 5px"></div>
<svg style="left:779.1px;top:406.56px" width="30" height="23.2" viewBox="0 0 28 22" preserveAspectRatio="none"><path d="M0.5 6V0.5H6M22 0.5H27.5V6M27.5 16V21.5H22M6 21.5H0.5V16" fill="none" stroke="#e8e8e8" stroke-width="0.9"/></svg>
<svg style="left:0;top:137.26px" width="1060" height="300"><path d="M793 281l1.2 4l-0.6 0.4Z" fill="#e02a1a" stroke="#e02a1a" stroke-width="1"/></svg>
<div class="t" style="left:814.4px;top:413.86px;font-size:8.4px;color:#e2e2e2">oil1</div>
<div class="a" style="left:753px;top:458.00px;width:293px;height:1px;background:#474747"></div>
<div class="a" style="left:777px;top:431.26px;width:0.6px;height:27.54px;background:#4a4a4a"></div>
<svg style="left:759.6px;top:441.46px" width="11.4" height="6.8" viewBox="0 0 11.4 6.8"><path d="M0.4 3.4C2 1 3.8 0.3 5.7 0.3C7.6 0.3 9.4 1 11 3.4C9.4 5.8 7.6 6.5 5.7 6.5C3.8 6.5 2 5.8 0.4 3.4Z" fill="#ececec"/><circle cx="5.7" cy="3.4" r="2.1" fill="#535353"/><circle cx="5.7" cy="3.4" r="1.2" fill="#cfcfcf"/></svg>
<div class="a" style="left:780.4px;top:435.66px;width:26.6px;height:20.4px;background:#404040;border-radius:1px"></div>
<div class="a" style="left:784.7px;top:438.26px;width:19.5px;height:14.4px;background-color:#fff;background-image:conic-gradient(#d4d4d4 25%,#fff 0 50%,#d4d4d4 0 75%,#fff 0);background-size:4px 4px"></div>
<svg style="left:0;top:164.66px" width="1060" height="300"><path d="M794 279l1.2 3l-0.6 0.4Z" fill="#f2d24a" stroke="#f2d24a" stroke-width="1"/></svg>
<div class="t" style="left:814.4px;top:441.26px;font-size:8.4px;color:#e2e2e2">diamond2</div>
<div class="a" style="left:753px;top:485.40px;width:293px;height:1px;background:#474747"></div>
<div class="a" style="left:777px;top:458.66px;width:0.6px;height:27.54px;background:#4a4a4a"></div>
<div class="a" style="left:759.8px;top:466.86px;width:10.4px;height:10.6px;border:1px solid #4c4c4c;box-shadow:inset 0 0 0 0.5px #585858"></div>
<div class="a" style="left:780.4px;top:463.06px;width:26.6px;height:20.4px;background:#404040;border-radius:1px"></div>
<div class="a" style="left:784.7px;top:465.66px;width:19.5px;height:14.4px;background-color:#fff;background-image:conic-gradient(#d4d4d4 25%,#fff 0 50%,#d4d4d4 0 75%,#fff 0);background-size:4px 4px"></div>
<svg style="left:0;top:192.06px" width="1060" height="300"><path d="M790 281l1.2 2.5l-0.6 0.4Z" fill="#e03a20" stroke="#e03a20" stroke-width="1"/></svg>
<div class="t" style="left:814.4px;top:468.66px;font-size:8.4px;color:#e2e2e2">oil2</div>
<div class="a" style="left:753px;top:512.80px;width:293px;height:1px;background:#474747"></div>
<div class="a" style="left:777px;top:486.06px;width:0.6px;height:27.54px;background:#4a4a4a"></div>
<svg style="left:759.6px;top:496.26px" width="11.4" height="6.8" viewBox="0 0 11.4 6.8"><path d="M0.4 3.4C2 1 3.8 0.3 5.7 0.3C7.6 0.3 9.4 1 11 3.4C9.4 5.8 7.6 6.5 5.7 6.5C3.8 6.5 2 5.8 0.4 3.4Z" fill="#ececec"/><circle cx="5.7" cy="3.4" r="2.1" fill="#535353"/><circle cx="5.7" cy="3.4" r="1.2" fill="#cfcfcf"/></svg>
<div class="a" style="left:780.4px;top:490.46px;width:26.6px;height:20.4px;background:#404040;border-radius:1px"></div>
<div class="a" style="left:784.7px;top:493.06px;width:19.5px;height:14.4px;background-color:#fff;background-image:conic-gradient(#d4d4d4 25%,#fff 0 50%,#d4d4d4 0 75%,#fff 0);background-size:4px 4px"></div>
<svg style="left:0;top:219.46px" width="1060" height="300"><path d="M791 280l1.2 3l-0.6 0.4Z" fill="#f2d24a" stroke="#f2d24a" stroke-width="1"/></svg>
<div class="t" style="left:814.4px;top:496.06px;font-size:8.4px;color:#e2e2e2">diamond3</div>
<div class="a" style="left:753px;top:540.20px;width:293px;height:1px;background:#474747"></div>
<div class="a" style="left:777px;top:513.46px;width:0.6px;height:27.54px;background:#4a4a4a"></div>
<div class="a" style="left:759.8px;top:521.66px;width:10.4px;height:10.6px;border:1px solid #4c4c4c;box-shadow:inset 0 0 0 0.5px #585858"></div>
<div class="a" style="left:780.4px;top:517.86px;width:26.6px;height:20.4px;background:#404040;border-radius:1px"></div>
<div class="a" style="left:784.7px;top:520.46px;width:19.5px;height:14.4px;background-color:#fff;background-image:conic-gradient(#d4d4d4 25%,#fff 0 50%,#d4d4d4 0 75%,#fff 0);background-size:4px 4px"></div>
<svg style="left:0;top:246.86px" width="1060" height="300"><path d="M791 282l1.2 3l-0.6 0.4Z" fill="#e03020" stroke="#e03020" stroke-width="1"/></svg>
<div class="t" style="left:814.4px;top:523.46px;font-size:8.4px;color:#e2e2e2">oil3</div>
<div class="a" style="left:1046.3px;top:266.6px;width:12.7px;height:275px;background:#4a4a4a"></div>
<div class="a" style="left:1047px;top:281.4px;width:10px;height:153.8px;background:#6b6b6b;border-radius:1px"></div>
<svg style="left:1049.6px;top:274px" width="6" height="3.5" viewBox="0 0 6 3.5"><path d="M0.4 3.1L3 0.5L5.6 3.1" fill="none" stroke="#bdbdbd" stroke-width="0.9"/></svg>
<svg style="left:1049.6px;top:532px" width="6" height="3.5" viewBox="0 0 6 3.5"><path d="M0.4 0.4L3 3L5.6 0.4" fill="none" stroke="#9a9a9a" stroke-width="0.9"/></svg>
<div class="a" style="left:1058.6px;top:169px;width:1.4px;height:393.5px;background:#3e3e3e"></div>
<svg style="left:0;top:0" width="1060" height="596">
<path d="M893.6 549.6H891.6C889.8 549.6 889.6 553.4 891.6 553.4H893.6M897.4 549.6H899.4C901.2 549.6 901.4 553.4 899.4 553.4H897.4M892.6 551.5H898.4" fill="none" stroke="#8a8a8a" stroke-width="1"/>
<text x="913.6" y="556" font-family="Liberation Sans" font-style="italic" font-size="11" fill="#cfcfcf">fx</text><path d="M924 556.6H926.4L925.2 558Z" fill="#cfcfcf"/>
<rect x="936.8" y="547.4" width="11" height="8.6" rx="0.8" fill="#cfcfcf"/><circle cx="942.3" cy="551.7" r="2.6" fill="#535353"/>
<circle cx="963.4" cy="551.6" r="4.2" fill="none" stroke="#cfcfcf" stroke-width="1.1"/><path d="M966.4 548.6A4.2 4.2 0 0 1 960.4 554.6Z" fill="#cfcfcf"/><path d="M966.6 556.6H969L967.8 558Z" fill="#cfcfcf"/>
<path d="M981.2 547.4H984.6L985.6 548.6H991.4V556.2H981.2Z" fill="#cfcfcf"/>
<rect x="1004.6" y="546.6" width="9.4" height="10" rx="0.8" fill="none" stroke="#cfcfcf" stroke-width="1.2"/><rect x="1005.8" y="547.8" width="7" height="7.6" fill="#cfcfcf" opacity="0.25"/><path d="M1009.3 549V555M1006.3 552H1012.3" stroke="#cfcfcf" stroke-width="1.3"/>
<path d="M1025.8 548.4H1034.8M1028.8 548.4V546.8H1031.8V548.4" fill="none" stroke="#cfcfcf" stroke-width="1"/><path d="M1027 549.6H1033.6L1033 557.2H1027.6Z" fill="none" stroke="#cfcfcf" stroke-width="1.1"/><path d="M1029.3 551V555.8M1031.3 551V555.8" stroke="#cfcfcf" stroke-width="0.9"/>
</svg>
<!-- TASKBAR -->
<div class="a" style="left:0;top:562.5px;width:1060px;height:34px;background:#282626"></div>
<div class="a" style="left:39.5px;top:562.8px;width:285.3px;height:33.2px;background:#f0f0f0"></div>

<svg style="left:0;top:0" width="1060" height="596">
<path d="M12.8 574.4L19.2 573.5V579.2H12.8ZM20 573.4L26.8 572.4V579.2H20ZM12.8 580H19.2V585.6L12.8 584.8ZM20 580H26.8V586.6L20 585.7Z" fill="#f2f2f2"/>
<circle cx="58.4" cy="577.6" r="3.9" fill="none" stroke="#222" stroke-width="1.2"/><path d="M55.6 580.4L50 586" stroke="#222" stroke-width="1.3"/>
<circle cx="344.2" cy="579.4" r="5.6" fill="none" stroke="#f2f2f2" stroke-width="1.6"/>
<path d="M377.8 573.4H383.2L384.6 574.8H396V587H377.8Z" fill="#f8d775"/><path d="M377.8 573.4H383.2L384.6 574.8H385.8V576.2H377.8Z" fill="#e7a83c"/><rect x="377.8" y="576.6" width="18.2" height="10.4" fill="#fbd44c"/><path d="M382.2 587V582.2H391.6V587H389.4V584.2H384.4V587Z" fill="#2b8ee0"/>
<path d="M418.6 576.6L428.6 570L438.6 576.6V588.2H418.6Z" fill="#0a64c0"/><path d="M418.6 577.6L428.6 583.8L438.6 577.6V588.2H418.6Z" fill="#2ea4f2"/><path d="M420.6 576.8L428.6 572.4L436.6 576.8L428.6 581.6Z" fill="#f2f2f2"/>
<circle cx="469.9" cy="579.3" r="9" fill="#db4437"/><path d="M469.9 579.3L478.9 579.3A9 9 0 0 1 465.4 587.1Z" fill="#f4c20d"/><path d="M469.9 579.3L465.4 587.1A9 9 0 0 1 462.1 574.8Z" fill="#0f9d58"/><circle cx="469.9" cy="579.3" r="4.2" fill="#fff"/><circle cx="469.9" cy="579.3" r="3.2" fill="#4285f4"/>
<path d="M503.2 588.2V578.2A7.6 7.6 0 1 1 510.8 585.8H507.6V588.2Z" fill="#1c1c1c" stroke="#f2f2f2" stroke-width="1.4"/><circle cx="510.8" cy="578.2" r="3.1" fill="none" stroke="#f2f2f2" stroke-width="1.8"/><path d="M516.4 582.6L519.8 585.6L516.6 588.6L513.4 585.6Z" fill="#f2f2f2"/>
<rect x="544.2" y="571.6" width="16.2" height="15" rx="2.6" fill="#7289da"/><path d="M547.6 576.6C549.4 575.2 555.2 575.2 557 576.6L557.8 582C556.4 583.4 548.2 583.4 546.8 582Z" fill="#f2f2f2"/><circle cx="550.2" cy="579.6" r="1" fill="#7289da"/><circle cx="554.4" cy="579.6" r="1" fill="#7289da"/>
<circle cx="557.8" cy="584" r="5.6" fill="#e8423c"/>
<text x="557.8" y="586.8" text-anchor="middle" font-family="Liberation Sans" font-weight="700" font-size="7.4" fill="#fff">9+</text>
</svg>
<div class="a" style="left:574px;top:562.5px;width:40.4px;height:33.5px;background:#3a3a3a"></div>
<div class="a" style="left:585px;top:570.4px;width:17.8px;height:16.6px;border:1.6px solid #31a8ff;border-radius:2.4px;background:#001e36"></div>
<div class="t" style="left:587.4px;top:573.6px;font-size:10px;font-weight:700;color:#bfe3ff">Ps</div>
<div class="a" style="left:370.2px;top:594.4px;width:34px;height:1.6px;background:#76b9ed"></div>
<div class="a" style="left:453.4px;top:594.4px;width:33.6px;height:1.6px;background:#76b9ed"></div>
<div class="a" style="left:535.8px;top:594.4px;width:33.9px;height:1.6px;background:#76b9ed"></div>
<div class="a" style="left:574px;top:594.4px;width:40.4px;height:1.6px;background:#76b9ed"></div>
<div class="t" style="left:72.8px;top:574.6px;font-size:12.4px;color:#222">Type here to search</div>
<!-- tray -->
<div class="a" style="left:738px;top:570.9px;width:41px;height:16.7px;border:1.6px solid #f2f2f2;background:#000"></div>
<div class="a" style="left:739.6px;top:572.5px;width:33.9px;height:13.5px;background:#1fa34a"></div>
<div class="a" style="left:779px;top:575.4px;width:2.4px;height:7.8px;background:#f2f2f2"></div>
<div class="t" style="left:745px;top:573.8px;font-size:11px;color:#f4f4f4">94%</div>
<svg style="left:0;top:0" width="1060" height="596">
<path d="M787.6 574V577.4M791.2 574V577.4" stroke="#f2f2f2" stroke-width="1.3"/><path d="M785.4 577.4H793.4V580.4C793.4 582.2 791.8 583 790.2 583V585.8H788.6V583C787 583 785.4 582.2 785.4 580.4Z" fill="#f2f2f2"/>
<path d="M802 582L807.3 577L812.6 582" fill="none" stroke="#e8e8e8" stroke-width="1"/>
<path d="M822.6 584.2C820 584.2 819.6 580.8 822.2 580.4C822.6 577.6 826.4 576.4 828.4 578.6C830.4 577.8 832.6 579.2 832.4 581C834.6 581.2 834.6 584.2 832.4 584.2Z" fill="#f2f2f2"/>
<rect x="842.6" y="577.2" width="10.2" height="6.6" fill="none" stroke="#f2f2f2" stroke-width="1.1"/><rect x="852.8" y="579" width="1" height="3" fill="#f2f2f2"/><rect x="843.6" y="578.2" width="7" height="4.6" fill="#f2f2f2"/><path d="M840.4 575.6V574M842.4 575.6V574M839.8 575.6H843V577C843 578 841.4 578.4 841.4 578.4" fill="none" stroke="#f2f2f2" stroke-width="0.8"/>
<path d="M862.4 585A10 10 0 0 1 872.4 575M864.6 585A7.8 7.8 0 0 1 872.4 577.2M866.8 585A5.6 5.6 0 0 1 872.4 579.4M869 585A3.4 3.4 0 0 1 872.4 581.6" fill="none" stroke="#bdbdbd" stroke-width="0.8"/><circle cx="871.8" cy="584.4" r="0.9" fill="#f2f2f2"/>
<path d="M880.6 578.4H883L886.8 575.2V585.2L883 582H880.6Z" fill="none" stroke="#e8e8e8" stroke-width="1"/><path d="M888.6 578.2C889.6 579.4 889.6 581 888.6 582.2M890.6 576.6C892.4 578.6 892.4 581.8 890.6 583.8" fill="none" stroke="#e8e8e8" stroke-width="0.9"/>
<path d="M905 584.2C904 583 904.8 581.6 906.4 581.2L909.2 580.4C910.8 580 911.2 578.4 910.2 577.4M907.6 578C909 576.2 911.6 575 913.8 576.2C915.4 577.2 915.2 579.4 913.8 580.4L910.6 582.6C909.6 583.4 909.8 584.6 910.8 585" fill="none" stroke="#e8e8e8" stroke-width="1"/>
<path d="M1026 573H1039.2V583.2H1032.4L1029.4 586.2V583.2H1026Z" fill="#f2f2f2"/><path d="M1028.4 575.6H1036.8M1028.4 577.6H1036.8M1028.4 579.6H1036.8" stroke="#1c1c1c" stroke-width="0.6"/>
<circle cx="1038.8" cy="585.7" r="6" fill="#1c1c1c" stroke="#e8e8e8" stroke-width="0.9"/>
<text x="1038.8" y="589.3" text-anchor="middle" font-family="Liberation Sans" font-size="9.6" fill="#f2f2f2">2</text>
</svg>
<div class="t" style="left:928.2px;top:574.6px;font-size:9.6px;color:#f2f2f2">ENG</div>
<div class="t" style="left:972.8px;top:567.4px;font-size:9.4px;color:#f2f2f2">14:48</div>
<div class="t" style="left:958.2px;top:582.6px;font-size:10.2px;color:#f2f2f2">20/05/2020</div>
<div class="a" style="left:1054.8px;top:562.5px;width:1px;height:33.5px;background:#5a5a5a"></div>
</body></html>
